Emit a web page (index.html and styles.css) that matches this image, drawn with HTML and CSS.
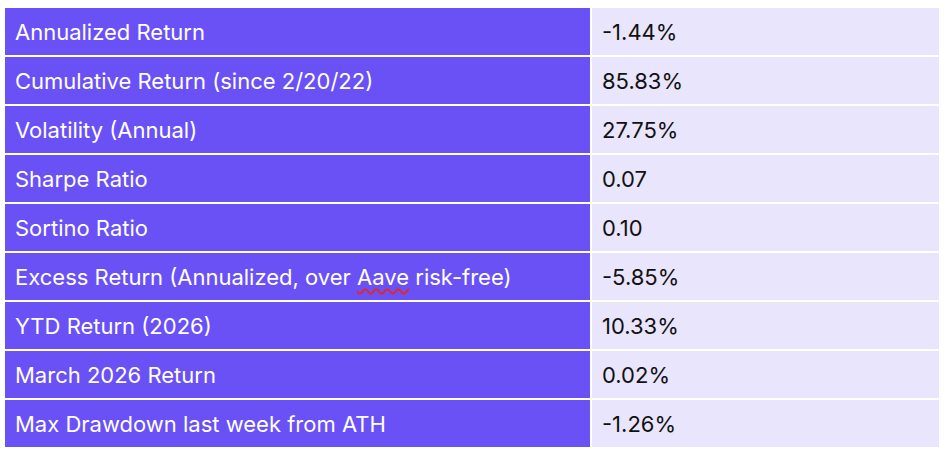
FILE: index.html
```html
<!DOCTYPE html>
<html>
<head>
<meta charset="utf-8">
<link rel="stylesheet" href="styles.css">
</head>
<body>
<div class="stats">
  <div class="label">Annualized Return</div><div class="value">-1.44%</div>
  <div class="label">Cumulative Return (since 2/20/22)</div><div class="value">85.83%</div>
  <div class="label">Volatility (Annual)</div><div class="value">27.75%</div>
  <div class="label">Sharpe Ratio</div><div class="value">0.07</div>
  <div class="label">Sortino Ratio</div><div class="value">0.10</div>
  <div class="label">Excess Return (Annualized, over <span class="spell">Aave</span> risk-free)</div><div class="value">-5.85%</div>
  <div class="label">YTD Return (2026)</div><div class="value">10.33%</div>
  <div class="label">March 2026 Return</div><div class="value">0.02%</div>
  <div class="label">Max Drawdown last week from ATH</div><div class="value">-1.26%</div>
</div>
</body>
</html>
```
FILE: styles.css
```css
html, body {
  margin: 0;
  padding: 0;
  background: #ffffff;
}
body {
  padding: 8px 0 0 5px;
  font-family: Inter, "Liberation Sans", sans-serif;
  font-size: 22px;
}
.stats {
  display: grid;
  grid-template-columns: 585px 347px;
  grid-auto-rows: 47px;
  gap: 2px;
}
.label, .value {
  line-height: 48px;
  padding-left: 10px;
  white-space: nowrap;
}
.label {
  background: #6a51f6;
  color: #ffffff;
}
.value {
  background: #e9e5fc;
  color: #111111;
}
.spell {
  text-decoration: underline wavy #e8241c;
  text-decoration-thickness: 1.5px;
  text-underline-offset: 3px;
}
```
